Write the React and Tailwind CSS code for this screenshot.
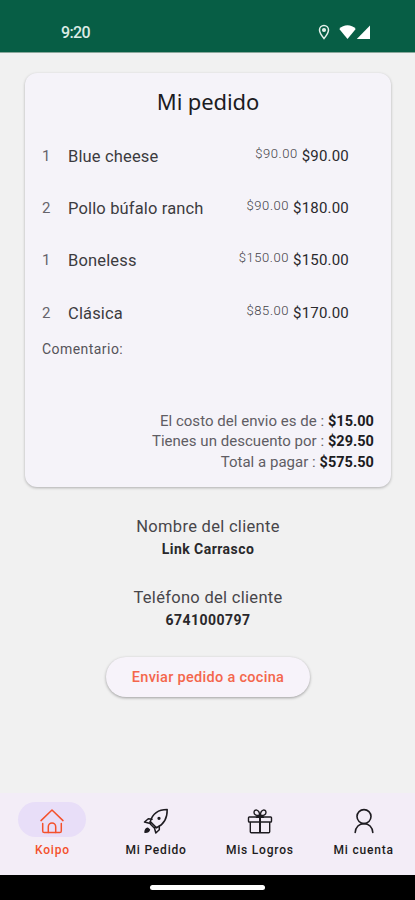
import React from 'react';

const items = [
  { qty: 1, name: 'Blue cheese', price: '$90.00', total: '$90.00' },
  { qty: 2, name: 'Pollo búfalo ranch', price: '$90.00', total: '$180.00' },
  { qty: 1, name: 'Boneless', price: '$150.00', total: '$150.00' },
  { qty: 2, name: 'Clásica', price: '$85.00', total: '$170.00' },
];

const totals = [
  { label: 'El costo del envio es de :', value: '$15.00' },
  { label: 'Tienes un descuento por :', value: '$29.50' },
  { label: 'Total a pagar :', value: '$575.50' },
];

const HomeIcon = () => (
  <svg width="26" height="26" viewBox="0 0 26 26" fill="none" stroke="currentColor" strokeWidth="1.5" strokeLinecap="round" strokeLinejoin="round">
    <path d="M2 12.6 13 2l11 10.6" />
    <path d="M3.7 15.5v7.4q0 1.6 1.6 1.6h15.4q1.6 0 1.6-1.6v-7.4" />
    <path d="M9.3 24.5v-5.8a3.7 3.7 0 0 1 7.4 0v5.8" />
  </svg>
);

const RocketIcon = () => (
  <svg width="26" height="26" viewBox="0 0 26 26" fill="none" stroke="currentColor" strokeWidth="1.5" strokeLinecap="round" strokeLinejoin="round">
    <path d="M7.3 13.6C9 7.5 13.5 1.5 24.2 1.5c.2 9.5-4 15.3-10.7 18.3z" />
    <path d="M9 11.3 5.3 10.8 1.5 14l5.8 1.5M16.3 18.3v3.5L12.8 25l-1.5-5.5M7.3 13.6v2.4l3.5 3.6h2.7" />
    <circle cx="16" cy="10.3" r="0.9" fill="currentColor" />
    <path d="M2 24.3c.1-2 .8-3.7 2.7-4.1l1.7 1.6c-.5 1.7-2.2 2.6-4.4 2.5z" fill="currentColor" />
  </svg>
);

const GiftIcon = () => (
  <svg width="26" height="26" viewBox="0 0 26 26" fill="none" stroke="currentColor" strokeWidth="1.4" strokeLinejoin="round">
    <rect x="1.5" y="9" width="23" height="5" rx="0.8" />
    <path d="M3.3 14v9.7q0 1 1 1h17.4q1 0 1-1V14" />
    <path d="M13 7v17.5" strokeWidth="2" />
    <path d="M12.7 7.3C9 7.8 7 6.5 7 4.2 7.3 1 12.2.7 12.7 7.3ZM13.3 7.3c3.7.5 5.7-.8 5.7-3.1C18.7 1 13.8.7 13.3 7.3Z" />
    <path d="M9.5 9.3 12.3 7h1.4l2.8 2.3z" fill="currentColor" />
  </svg>
);

const UserIcon = () => (
  <svg width="26" height="26" viewBox="0 0 26 26" fill="none" stroke="currentColor" strokeWidth="1.6" strokeLinecap="round">
    <circle cx="13" cy="8.6" r="7" />
    <path d="M4.2 24.5c.3-5.5 4-8.9 8.8-8.9s8.5 3.4 8.8 8.9" />
  </svg>
);

const tabs = [
  { label: 'Koipo', icon: HomeIcon, active: true },
  { label: 'Mi Pedido', icon: RocketIcon },
  { label: 'Mis Logros', icon: GiftIcon },
  { label: 'Mi cuenta', icon: UserIcon },
];

function StatusBar() {
  return (
    <header className="flex h-[53px] items-start justify-between border-b border-[#8aa89c] bg-[#075e45] pt-[23px] pr-[44px] pl-[61px] text-white">
      <span className="text-[16px] leading-5 font-medium tracking-[-0.6px] text-[#dcece5]">9:20</span>
      <div className="flex items-center pt-[1px]">
        <svg width="12" height="16" viewBox="0 0 12 16" fill="none" stroke="#e4f0ea" strokeWidth="1.5">
          <path d="M6 14.5C3.5 11.5 1.5 8.7 1.5 6a4.5 4.5 0 0 1 9 0c0 2.7-2 5.5-4.5 8.5z" />
          <circle cx="6" cy="6" r="1.3" fill="#e4f0ea" />
        </svg>
        <svg className="ml-[9px]" width="17" height="14" viewBox="0 0 17 14" fill="currentColor">
          <path d="M8.5 14 .3 4C2.5 1.6 5.3.3 8.5.3S14.5 1.6 16.7 4z" />
        </svg>
        <svg width="15" height="14" viewBox="0 0 15 14" fill="currentColor">
          <path d="M14 .5V14H.8z" />
        </svg>
      </div>
    </header>
  );
}

function OrderCard() {
  return (
    <section className="mx-[25px] mt-[20px] h-[414px] w-[366px] rounded-[12px] bg-[#f5f3f9] pt-[14px] shadow-[0_1px_3px_rgba(0,0,0,0.28)]">
      <h1 className="text-center font-['Noto_Sans'] text-[22px] leading-7 tracking-[-0.1px] text-[#1c1b1f]">Mi pedido</h1>

      <div className="mt-[17px] pr-[42px] pl-[17px]">
        {items.map((item) => (
          <div key={item.name} className="flex h-[52.2px] items-start pt-[14px]">
            <span className="w-[26px] text-[15px] leading-5 text-[#66646b]">{item.qty}</span>
            <span className="mt-[1px] flex-1 text-[16.5px] leading-5 tracking-[0.15px] text-[#3c3b40]">{item.name}</span>
            <span className="mt-[-2px] text-[13px] leading-5 font-light tracking-[0.55px] text-[#444248]">{item.price}</span>
            <span className="ml-[4px] text-[15px] leading-5 tracking-[0.2px] text-[#2a292d]">{item.total}</span>
          </div>
        ))}
      </div>

      <p className="mt-[-2px] pl-[17px] text-[14px] leading-5 tracking-[0.45px] text-[#55535a]">Comentario:</p>

      <div className="mt-[52px] flex flex-col items-end pr-[17px]">
        {totals.map((row) => (
          <p key={row.label} className="h-[20.4px] text-[15px] leading-5 text-[#5f5d64]">
            <span className="tracking-[0.03px]">{row.label}</span>{' '}
            <span className="text-[14.5px] font-bold tracking-[0.05px] text-[#1c1b1f]">{row.value}</span>
          </p>
        ))}
      </div>
    </section>
  );
}

function ClientInfo({ label, value }) {
  return (
    <div className="h-[71px] text-center">
      <p className="text-[16.5px] leading-6 tracking-[0.3px] text-[#47464a]">{label}</p>
      <p className="text-[14px] leading-[21px] font-bold tracking-[0.45px] text-[#29282b]">{value}</p>
    </div>
  );
}

function BottomNav() {
  return (
    <nav className="grid h-[82px] grid-cols-4 bg-[#f3edf7] pt-[9px]">
      {tabs.map(({ label, icon: Icon, active }) => (
        <div
          key={label}
          className={active ? 'flex flex-col items-center text-[#f4512c]' : 'flex flex-col items-center text-[#1d1b20]'}
        >
          <div className={active ? 'flex h-[35px] w-[68px] items-center justify-center rounded-full bg-[#e8def8] pt-[2px]' : 'flex h-[35px] w-[68px] items-center justify-center pt-[2px] pl-[1px]'}>
            <Icon />
          </div>
          <span className="mt-[5px] pl-[1px] text-[12px] leading-4 font-medium tracking-[0.8px]">{label}</span>
        </div>
      ))}
    </nav>
  );
}

export default function App() {
  return (
    <div className="flex h-[900px] w-[415px] flex-col overflow-hidden bg-[#f1f1f1] font-[Roboto,sans-serif]">
      <StatusBar />
      <main className="flex-1">
        <OrderCard />
        <div className="mt-[28px] pl-[1px]">
          <ClientInfo label="Nombre del cliente" value="Link Carrasco" />
          <ClientInfo label="Teléfono del cliente" value="6741000797" />
        </div>
        <button className="mx-auto block h-[40px] w-[204px] rounded-full bg-[#f7f3fa] pt-[1px] pl-[1px] text-[14.5px] font-medium tracking-[0.3px] text-[#f4664c] shadow-[0_1px_3px_rgba(0,0,0,0.35)]">
          Enviar pedido a cocina
        </button>
      </main>
      <BottomNav />
      <footer className="flex h-[25px] justify-center bg-black pt-[10px]">
        <div className="h-[5px] w-[115px] rounded-full bg-white" />
      </footer>
    </div>
  );
}
